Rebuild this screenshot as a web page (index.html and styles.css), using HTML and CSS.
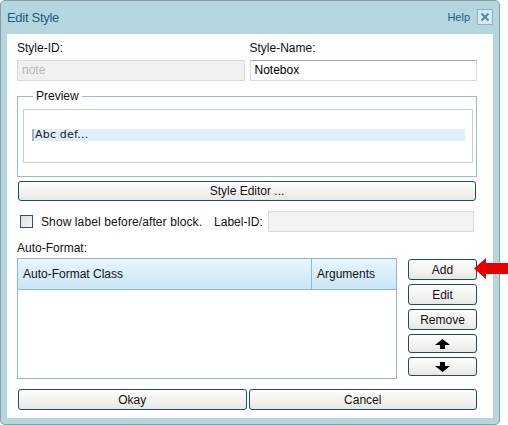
FILE: index.html
```html
<!DOCTYPE html>
<html>
<head>
<meta charset="utf-8">
<link rel="stylesheet" href="styles.css">
</head>
<body>
<div class="dialog">
  <div class="titlebar">
    <span class="title">Edit Style</span>
    <span class="help">Help</span>
    <span class="close"><svg width="10" height="10" viewBox="0 0 10 10"><path d="M1.5 1.5 L8.5 8.5 M8.5 1.5 L1.5 8.5" stroke="#4a8bb0" stroke-width="2" fill="none"/></svg></span>
  </div>
  <div class="content">
    <div class="grid2">
      <div class="field">
        <div class="lbl">Style-ID:</div>
        <div class="input disabled">note</div>
      </div>
      <div class="field">
        <div class="lbl">Style-Name:</div>
        <div class="input text">Notebox</div>
      </div>
    </div>
    <fieldset class="preview">
      <legend>Preview</legend>
      <div class="preview-box"><div class="preview-line">Abc def...</div></div>
    </fieldset>
    <div class="btn wide">Style Editor ...</div>
    <div class="label-row">
      <span class="checkbox"></span>
      <span class="cb-text">Show label before/after block.</span>
      <span class="lid">Label-ID:</span>
      <div class="input lid-input"></div>
    </div>
    <div class="section-label">Auto-Format:</div>
    <div class="af">
      <div class="table">
        <div class="thead">
          <div class="th c1">Auto-Format Class</div>
          <div class="th c2">Arguments</div>
        </div>
      </div>
      <div class="side">
        <div class="btn sbtn">Add</div>
        <div class="btn sbtn">Edit</div>
        <div class="btn sbtn">Remove</div>
        <div class="btn sbtn small"><svg width="15" height="10" viewBox="0 0 15 10"><polygon points="7.5,0 15,6 10,6 10,10 5,10 5,6 0,6" fill="#000"/></svg></div>
        <div class="btn sbtn small"><svg width="15" height="10" viewBox="0 0 15 10"><polygon points="7.5,10 15,4 10,4 10,0 5,0 5,4 0,4" fill="#000"/></svg></div>
      </div>
    </div>
    <div class="footer">
      <div class="btn fbtn">Okay</div>
      <div class="btn fbtn">Cancel</div>
    </div>
  </div>
</div>
<svg class="red-arrow" width="34" height="21" viewBox="0 0 34 21"><polygon points="0,10.5 12,0 12,5 34,5 34,16 12,16 12,21" fill="#e60000"/></svg>
</body>
</html>
```
FILE: styles.css
```css
* { box-sizing: border-box; }
body {
  margin: 0;
  background: #fff;
  font-family: "Liberation Sans", Arial, sans-serif;
  font-size: 12px;
  color: #111;
  width: 508px;
  height: 425px;
  overflow: hidden;
  position: relative;
}
.dialog {
  width: 500px;
  height: 425px;
  border: 1px solid #8a9ca4;
  border-radius: 5px;
  background: #b4d7df;
  padding: 0 6px 6px 6px;
  display: flex;
  flex-direction: column;
}
.titlebar {
  height: 33px;
  display: flex;
  align-items: center;
  padding-bottom: 1px;
}
.title {
  font-size: 13px;
  color: #1c5b80;
  letter-spacing: -0.3px;
  flex: 1;
}
.help {
  font-size: 11px;
  color: #1c5b80;
  margin-right: 7px;
}
.close {
  width: 16px;
  height: 16px;
  border: 1px solid #86b3c6;
  background: #d6eaf0;
  display: flex;
  align-items: center;
  justify-content: center;
}
.content {
  background: #fff;
  height: 384px;
  padding: 7px 16px 8px 10px;
  display: flex;
  flex-direction: column;
}
.grid2 {
  display: grid;
  grid-template-columns: 1fr 1fr;
  column-gap: 5px;
}
.lbl {
  line-height: 14px;
  height: 14px;
  margin-bottom: 5px;
}
.input {
  height: 21px;
  line-height: 19px;
  padding: 0 4px;
  border: 1px solid #dadada;
}
.input.disabled {
  background: #f0f0f0;
  color: #b8b8b8;
}
.input.text {
  border-top-color: #a8a8a8;
  color: #000;
}
.preview {
  margin: 8px 0 0 0;
  padding: 6px 3px 13px 5px;
  border: 1px solid #90bfd6;
  min-inline-size: 0;
}
.preview legend {
  padding: 0 3px;
  margin-left: 10px;
  line-height: 14px;
  font-size: 12px;
  color: #111;
}
.preview-box {
  border: 1px solid #cdcdcd;
  height: 54px;
  padding: 19px 7px 0 8px;
}
.preview-line {
  height: 12px;
  background: #e1edfb;
  border-left: 2px solid #a6b2c2;
  font-family: "DejaVu Sans", Verdana, sans-serif;
  font-size: 11px;
  line-height: 12px;
  padding-left: 1px;
  color: #222;
  letter-spacing: 0.2px;
}
.btn {
  border: 1px solid #1f4a70;
  border-radius: 3px;
  background: linear-gradient(#fdfdfd, #f2f2f0 60%, #e6e6e2);
  display: flex;
  align-items: center;
  justify-content: center;
  color: #111;
  height: 21px;
}
.wide {
  margin: 4px 1px 0 1px;
  height: 20px;
}
.label-row {
  margin-top: 10px;
  height: 21px;
  display: flex;
  align-items: center;
}
.checkbox {
  width: 13px;
  height: 13px;
  border: 1px solid #2e5272;
  background: linear-gradient(135deg, #dcdcdc, #f6f6f6);
  margin-left: 3px;
  margin-right: 8px;
}
.cb-text { margin-right: 12px; letter-spacing: 0.1px; }
.lid { margin-right: 5px; }
.lid-input {
  flex: 1;
  margin-right: 3px;
  background: #f3f3f3;
}
.section-label {
  margin-top: 9px;
  line-height: 14px;
  height: 14px;
}
.af {
  margin-top: 3px;
  display: flex;
  gap: 11px;
  height: 121px;
}
.table {
  flex: 1;
  border: 1px solid #93b6cb;
  background: #fff;
}
.thead {
  display: flex;
  height: 31px;
  background: linear-gradient(#eaf6fe, #c9e5f7);
  border-bottom: 1px solid #8bb9d6;
}
.th {
  display: flex;
  align-items: center;
  padding-left: 5px;
}
.c1 {
  width: 294px;
  border-right: 1px solid #8bb9d6;
}
.c2 { flex: 1; }
.side {
  width: 69px;
  margin-top: 1px;
  display: flex;
  flex-direction: column;
  gap: 4px;
}
.sbtn { height: 21px; }
.sbtn.small { height: 19px; }
.footer {
  margin-top: 10px;
  display: flex;
  gap: 2px;
  padding-left: 1px;
}
.fbtn {
  flex: 1;
  height: 21px;
}
.red-arrow {
  position: absolute;
  left: 474px;
  top: 258px;
}
```
